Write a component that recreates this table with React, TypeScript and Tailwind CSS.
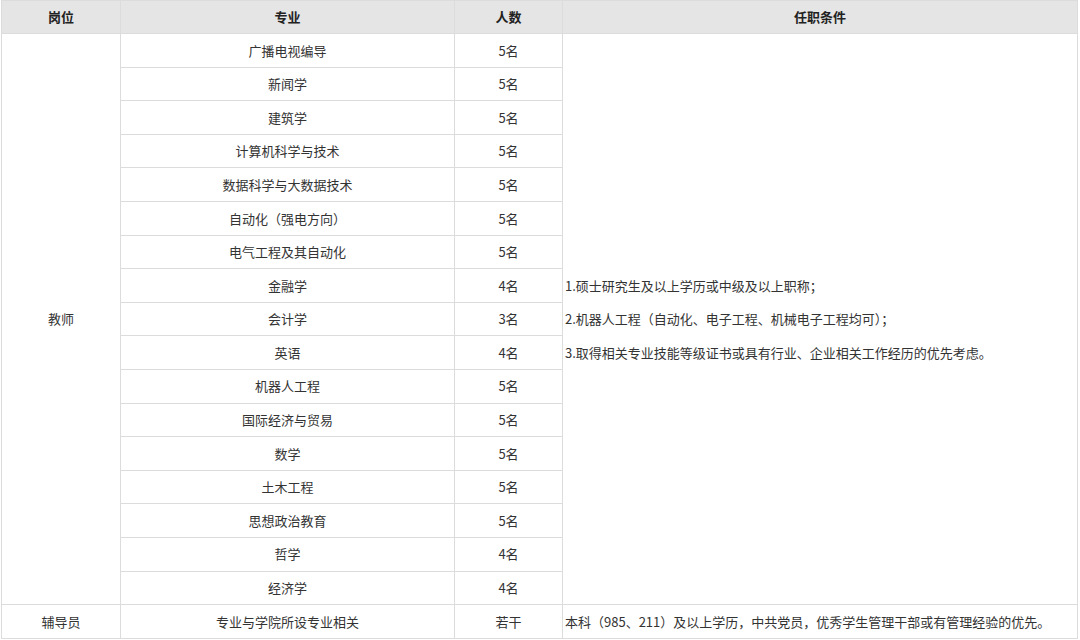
const majors: [string, string][] = [
  ['广播电视编导', '5名'],
  ['新闻学', '5名'],
  ['建筑学', '5名'],
  ['计算机科学与技术', '5名'],
  ['数据科学与大数据技术', '5名'],
  ['自动化（强电方向）', '5名'],
  ['电气工程及其自动化', '5名'],
  ['金融学', '4名'],
  ['会计学', '3名'],
  ['英语', '4名'],
  ['机器人工程', '5名'],
  ['国际经济与贸易', '5名'],
  ['数学', '5名'],
  ['土木工程', '5名'],
  ['思想政治教育', '5名'],
  ['哲学', '4名'],
  ['经济学', '4名'],
]

const cell = 'border border-[#dcdcdc] h-[33.6px] p-0 align-middle'

export default function App() {
  return (
    <div
      className="w-[1080px] h-[640px] bg-white overflow-hidden pl-px pr-[2px]"
      style={{ fontFamily: '"Microsoft YaHei", "Noto Sans CJK SC", sans-serif' }}
    >
      <table className="w-full border-collapse table-fixed text-[13px] text-[#333]">
        <colgroup>
          <col className="w-[119px]" />
          <col className="w-[334px]" />
          <col className="w-[108px]" />
          <col />
        </colgroup>
        <thead>
          <tr className="bg-[#e5e5e5] text-[#222] font-bold">
            <th className={clsx(cell, 'h-[33px]')}>岗位</th>
            <th className={clsx(cell, 'h-[33px]')}>专业</th>
            <th className={clsx(cell, 'h-[33px]')}>人数</th>
            <th className={clsx(cell, 'h-[33px]')}>任职条件</th>
          </tr>
        </thead>
        <tbody>
          {majors.map(([name, count], i) => (
            <tr key={name}>
              {i === 0 && (
                <td rowSpan={majors.length} className={clsx(cell, 'text-center')}>
                  教师
                </td>
              )}
              <td className={clsx(cell, 'text-center')}>{name}</td>
              <td className={clsx(cell, 'text-center')}>{count}</td>
              {i === 0 && (
                <td rowSpan={majors.length} className={clsx(cell, 'pl-[2px] leading-[33.5px]')}>
                  <p>1.硕士研究生及以上学历或中级及以上职称；</p>
                  <p>2.机器人工程（自动化、电子工程、机械电子工程均可）；</p>
                  <p>3.取得相关专业技能等级证书或具有行业、企业相关工作经历的优先考虑。</p>
                </td>
              )}
            </tr>
          ))}
          <tr>
            <td className={clsx(cell, 'text-center')}>辅导员</td>
            <td className={clsx(cell, 'text-center')}>专业与学院所设专业相关</td>
            <td className={clsx(cell, 'text-center')}>若干</td>
            <td className={clsx(cell, 'pl-[2px]')}>本科（985、211）及以上学历，中共党员，优秀学生管理干部或有管理经验的优先。</td>
          </tr>
        </tbody>
      </table>
    </div>
  )
}

function clsx(...c: (string | false | undefined)[]) {
  return c.filter(Boolean).join(' ')
}
